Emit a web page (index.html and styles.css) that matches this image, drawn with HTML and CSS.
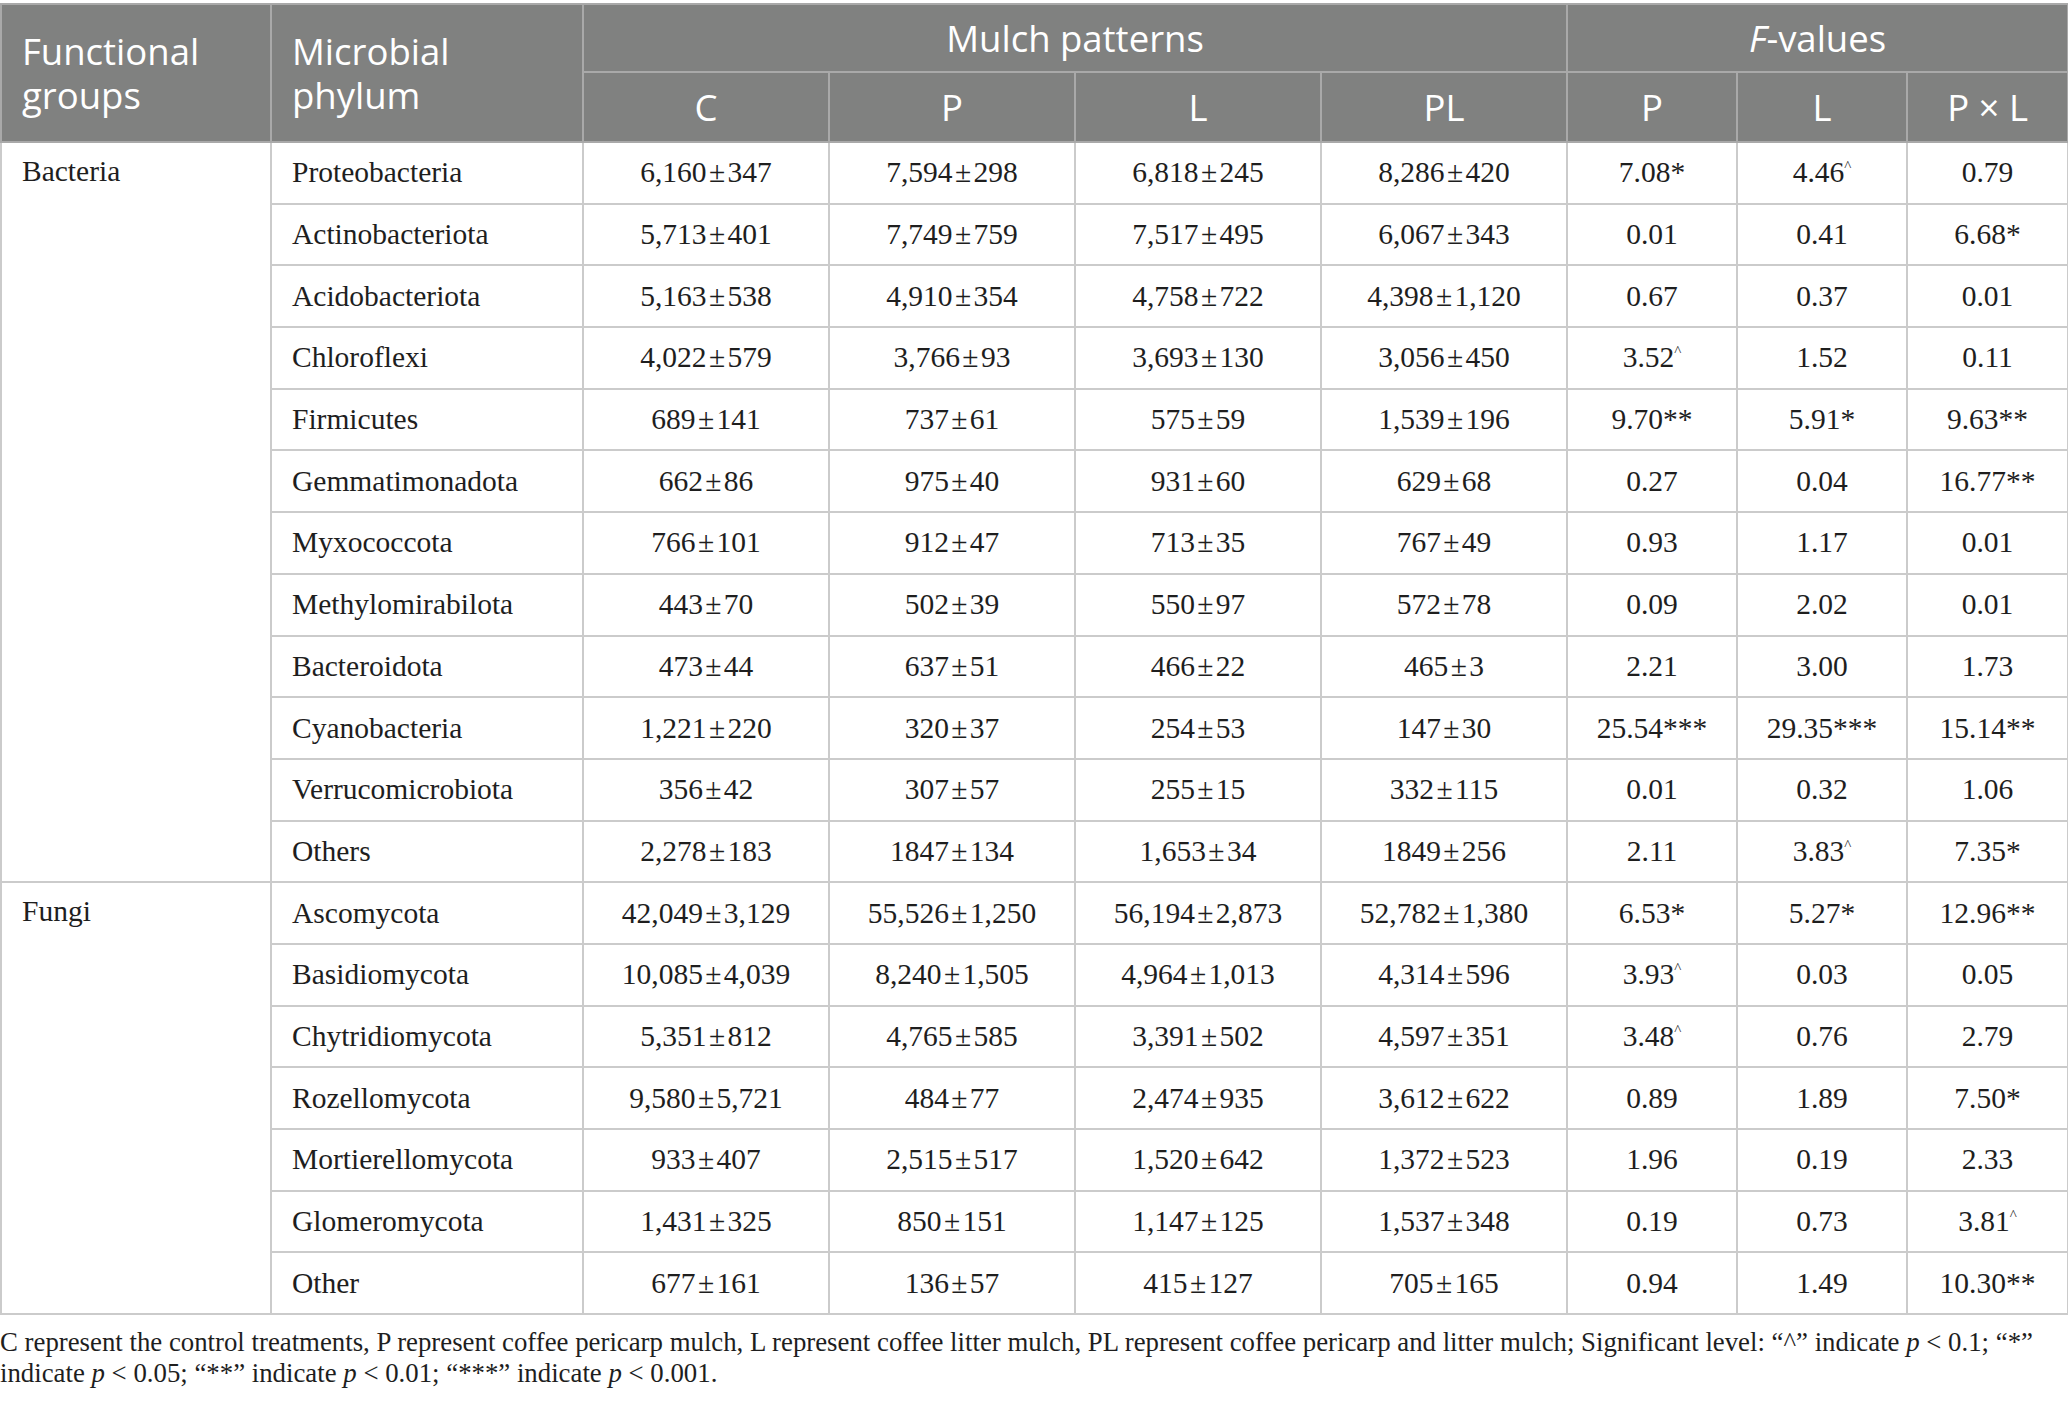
FILE: index.html
```html
<!DOCTYPE html>
<html>
<head>
  <meta charset="utf-8">
  <title>Microbial phylum abundance under mulch patterns</title>
  <link rel="stylesheet" href="styles.css">
</head>
<body>
  <table class="data">
    <colgroup>
      <col class="c-group">
      <col class="c-phylum">
      <col class="c-mulch">
      <col class="c-mulch">
      <col class="c-mulch">
      <col class="c-mulch">
      <col class="c-f">
      <col class="c-f">
      <col class="c-last">
    </colgroup>
    <thead>
      <tr class="head-top">
        <th rowspan="2" class="left">Functional<br>groups</th>
        <th rowspan="2" class="left">Microbial<br>phylum</th>
        <th colspan="4">Mulch patterns</th>
        <th colspan="3"><i>F</i>-values</th>
      </tr>
      <tr class="head-sub">
        <th>C</th>
        <th>P</th>
        <th>L</th>
        <th>PL</th>
        <th>P</th>
        <th>L</th>
        <th>P × L</th>
      </tr>
    </thead>
    <tbody>
      <tr>
        <td rowspan="12" class="group">Bacteria</td>
        <td class="name">Proteobacteria</td>
        <td>6,160 ± 347</td><td>7,594 ± 298</td><td>6,818 ± 245</td><td>8,286 ± 420</td>
        <td>7.08*</td><td>4.46<span class="tr">^</span></td><td>0.79</td>
      </tr>
      <tr>
        <td class="name">Actinobacteriota</td>
        <td>5,713 ± 401</td><td>7,749 ± 759</td><td>7,517 ± 495</td><td>6,067 ± 343</td>
        <td>0.01</td><td>0.41</td><td>6.68*</td>
      </tr>
      <tr>
        <td class="name">Acidobacteriota</td>
        <td>5,163 ± 538</td><td>4,910 ± 354</td><td>4,758 ± 722</td><td>4,398 ± 1,120</td>
        <td>0.67</td><td>0.37</td><td>0.01</td>
      </tr>
      <tr>
        <td class="name">Chloroflexi</td>
        <td>4,022 ± 579</td><td>3,766 ± 93</td><td>3,693 ± 130</td><td>3,056 ± 450</td>
        <td>3.52<span class="tr">^</span></td><td>1.52</td><td>0.11</td>
      </tr>
      <tr>
        <td class="name">Firmicutes</td>
        <td>689 ± 141</td><td>737 ± 61</td><td>575 ± 59</td><td>1,539 ± 196</td>
        <td>9.70**</td><td>5.91*</td><td>9.63**</td>
      </tr>
      <tr>
        <td class="name">Gemmatimonadota</td>
        <td>662 ± 86</td><td>975 ± 40</td><td>931 ± 60</td><td>629 ± 68</td>
        <td>0.27</td><td>0.04</td><td>16.77**</td>
      </tr>
      <tr>
        <td class="name">Myxococcota</td>
        <td>766 ± 101</td><td>912 ± 47</td><td>713 ± 35</td><td>767 ± 49</td>
        <td>0.93</td><td>1.17</td><td>0.01</td>
      </tr>
      <tr>
        <td class="name">Methylomirabilota</td>
        <td>443 ± 70</td><td>502 ± 39</td><td>550 ± 97</td><td>572 ± 78</td>
        <td>0.09</td><td>2.02</td><td>0.01</td>
      </tr>
      <tr>
        <td class="name">Bacteroidota</td>
        <td>473 ± 44</td><td>637 ± 51</td><td>466 ± 22</td><td>465 ± 3</td>
        <td>2.21</td><td>3.00</td><td>1.73</td>
      </tr>
      <tr>
        <td class="name">Cyanobacteria</td>
        <td>1,221 ± 220</td><td>320 ± 37</td><td>254 ± 53</td><td>147 ± 30</td>
        <td>25.54***</td><td>29.35***</td><td>15.14**</td>
      </tr>
      <tr>
        <td class="name">Verrucomicrobiota</td>
        <td>356 ± 42</td><td>307 ± 57</td><td>255 ± 15</td><td>332 ± 115</td>
        <td>0.01</td><td>0.32</td><td>1.06</td>
      </tr>
      <tr>
        <td class="name">Others</td>
        <td>2,278 ± 183</td><td>1847 ± 134</td><td>1,653 ± 34</td><td>1849 ± 256</td>
        <td>2.11</td><td>3.83<span class="tr">^</span></td><td>7.35*</td>
      </tr>
      <tr>
        <td rowspan="7" class="group">Fungi</td>
        <td class="name">Ascomycota</td>
        <td>42,049 ± 3,129</td><td>55,526 ± 1,250</td><td>56,194 ± 2,873</td><td>52,782 ± 1,380</td>
        <td>6.53*</td><td>5.27*</td><td>12.96**</td>
      </tr>
      <tr>
        <td class="name">Basidiomycota</td>
        <td>10,085 ± 4,039</td><td>8,240 ± 1,505</td><td>4,964 ± 1,013</td><td>4,314 ± 596</td>
        <td>3.93<span class="tr">^</span></td><td>0.03</td><td>0.05</td>
      </tr>
      <tr>
        <td class="name">Chytridiomycota</td>
        <td>5,351 ± 812</td><td>4,765 ± 585</td><td>3,391 ± 502</td><td>4,597 ± 351</td>
        <td>3.48<span class="tr">^</span></td><td>0.76</td><td>2.79</td>
      </tr>
      <tr>
        <td class="name">Rozellomycota</td>
        <td>9,580 ± 5,721</td><td>484 ± 77</td><td>2,474 ± 935</td><td>3,612 ± 622</td>
        <td>0.89</td><td>1.89</td><td>7.50*</td>
      </tr>
      <tr>
        <td class="name">Mortierellomycota</td>
        <td>933 ± 407</td><td>2,515 ± 517</td><td>1,520 ± 642</td><td>1,372 ± 523</td>
        <td>1.96</td><td>0.19</td><td>2.33</td>
      </tr>
      <tr>
        <td class="name">Glomeromycota</td>
        <td>1,431 ± 325</td><td>850 ± 151</td><td>1,147 ± 125</td><td>1,537 ± 348</td>
        <td>0.19</td><td>0.73</td><td>3.81<span class="tr">^</span></td>
      </tr>
      <tr>
        <td class="name">Other</td>
        <td>677 ± 161</td><td>136 ± 57</td><td>415 ± 127</td><td>705 ± 165</td>
        <td>0.94</td><td>1.49</td><td>10.30**</td>
      </tr>
    </tbody>
  </table>

  <p class="note">C represent the control treatments, P represent coffee pericarp mulch, L represent coffee litter mulch, PL represent coffee pericarp and litter mulch; Significant level: “^” indicate <i>p</i> &lt; 0.1; “*”<br>indicate <i>p</i> &lt; 0.05; “**” indicate <i>p</i> &lt; 0.01; “***” indicate <i>p</i> &lt; 0.001.</p>
</body>
</html>
```

FILE: styles.css
```css
body {
  margin: 0;
  padding-top: 3px;
  background-color: #fff;
  color: #1e1e1e;
  font-family: "Liberation Serif", serif;
}

.data {
  width: 2067px;
  border-collapse: collapse;
  table-layout: fixed;
}

.c-group {
  width: 270px;
}

.c-phylum {
  width: 312px;
}

.c-mulch {
  width: 246px;
}

.c-f {
  width: 170px;
}

.c-last {
  width: 161px;
}

.data th {
  background-color: #808180;
  color: #fff;
  font-family: "Open Sans", sans-serif;
  font-weight: 400;
  font-size: 36.5px;
  line-height: 44px;
  border: 2px solid #a9a9a9;
  padding: 0 20px;
  text-align: center;
}

.data th.left {
  text-align: left;
}

.head-top {
  height: 68px;
}

.head-sub {
  height: 70px;
}

.data td {
  height: 59.7px;
  padding: 0 20px;
  border: 2px solid #cbcbcb;
  font-size: 29.5px;
  word-spacing: -5px;
  text-align: center;
  white-space: nowrap;
}

.data td.name,
.data td.group {
  text-align: left;
  word-spacing: 0;
}

.data td.group {
  vertical-align: top;
  padding-top: 12px;
}

.tr {
  font-size: 15px;
  vertical-align: 11px;
}

.note {
  margin: 12px 0 0;
  font-size: 26.8px;
  line-height: 31px;
}
```
